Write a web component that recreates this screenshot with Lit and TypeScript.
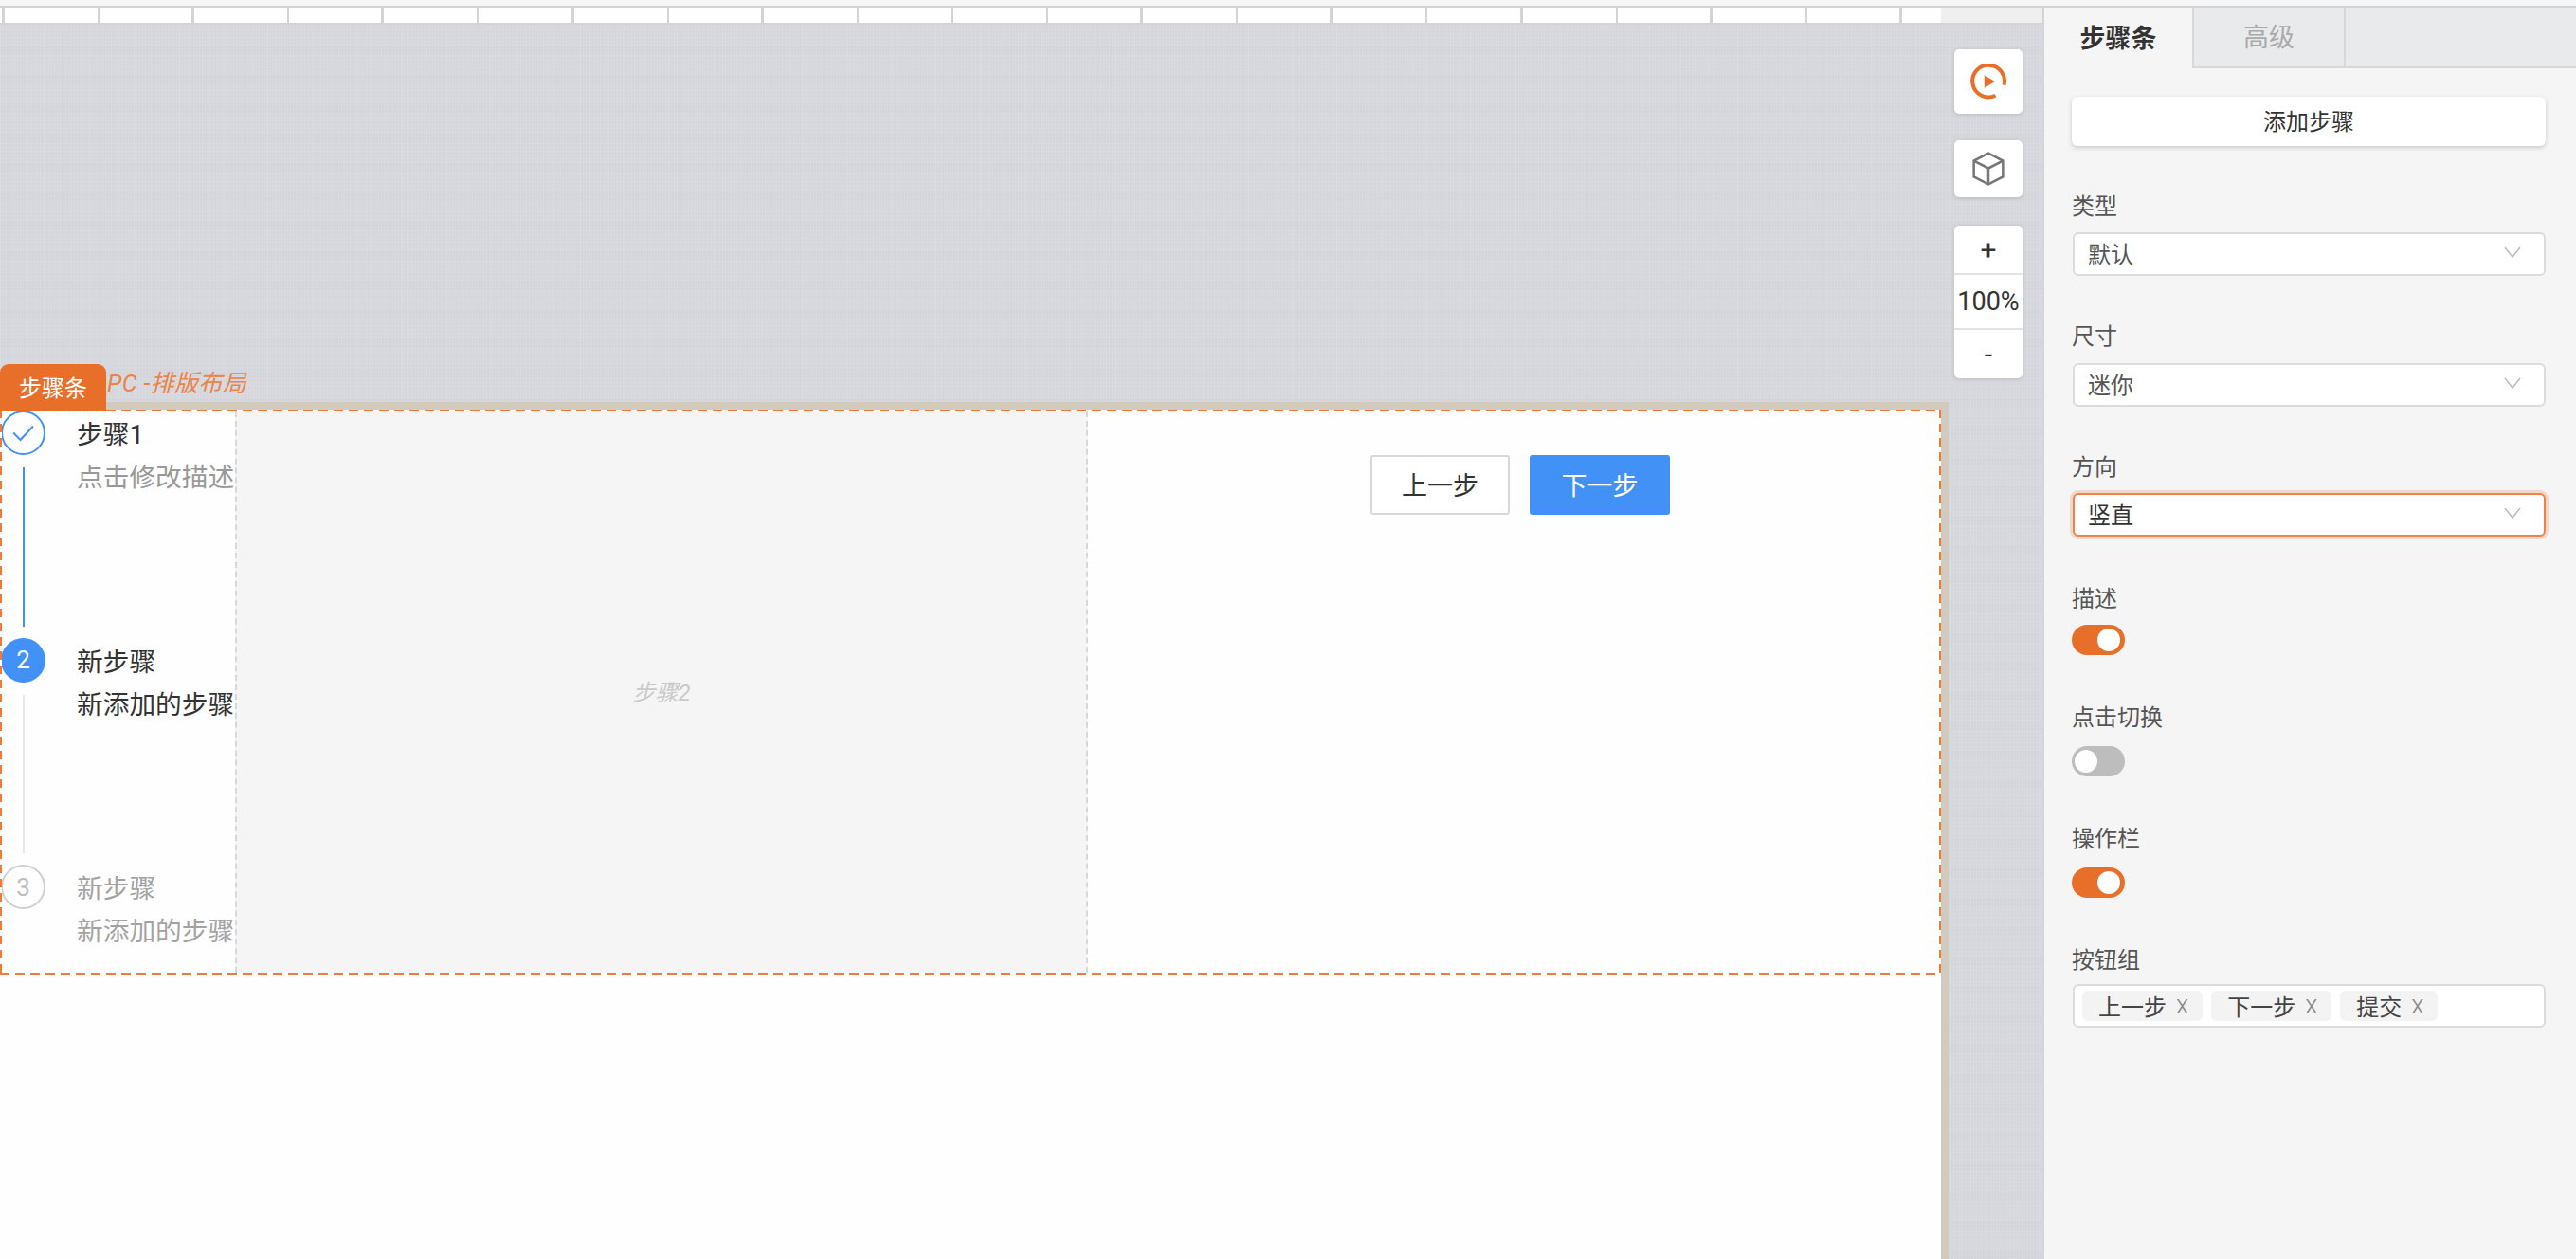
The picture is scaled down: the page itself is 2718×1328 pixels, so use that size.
import { LitElement, html, css } from 'lit';
import { customElement } from 'lit/decorators.js';

interface Step {
  mark: string;
  title: string;
  desc: string;
  state: string;
}

const STEPS: Step[] = [
  { mark: '', title: '步骤1', desc: '点击修改描述', state: 'done' },
  { mark: '2', title: '新步骤', desc: '新添加的步骤', state: 'active' },
  { mark: '3', title: '新步骤', desc: '新添加的步骤', state: 'todo' },
];

// top = gap above the label, gap = gap between label and control
const FIELDS = [
  { label: '类型', kind: 'select', value: '默认', top: 49, gap: 12 },
  { label: '尺寸', kind: 'select', value: '迷你', top: 49, gap: 13 },
  { label: '方向', kind: 'focus', value: '竖直', top: 49, gap: 12 },
  { label: '描述', kind: 'on', value: '', top: 51, gap: 12 },
  { label: '点击切换', kind: 'off', value: '', top: 51, gap: 15 },
  { label: '操作栏', kind: 'on', value: '', top: 51, gap: 15 },
  { label: '按钮组', kind: 'tags', value: '', top: 51, gap: 10 },
];

const TAGS = ['上一步', '下一步', '提交'];

@customElement('app-root')
export class AppRoot extends LitElement {
  static styles = css`
    :host {
      display: flex;
      flex-direction: column;
      width: 2718px;
      height: 1328px;
      overflow: hidden;
      background: #f5f5f5;
      font-family: Roboto, 'Noto Sans CJK SC', sans-serif;
      font-size: 24px;
      color: #333;
    }
    .top {
      flex: none;
      height: 6px;
      background: #f6f6f6;
      border-bottom: 2px solid #d4d4d4;
    }
    .main {
      flex: 1;
      display: flex;
      min-height: 0;
    }
    .stage {
      flex: none;
      width: 2155px;
      display: flex;
      flex-direction: column;
    }
    .ruler {
      flex: none;
      height: 16px;
      background: #efefef;
      border-bottom: 2px solid #d4d4d4;
    }
    .ticks {
      width: 2048px;
      height: 100%;
      background-color: #fefefe;
      background-image:
        repeating-linear-gradient(90deg, #d4d4d4 0 3px, transparent 3px 200.2px),
        repeating-linear-gradient(90deg, transparent 0 101px, #d4d4d4 101px 103px, transparent 103px 200.2px);
      background-position: 2px 0;
    }
    .canvas {
      flex: 1;
      position: relative;
      display: flex;
      flex-direction: column;
      padding-top: 398px;
      min-height: 0;
      background-color: #d5d7dc;
      background-image:
        repeating-linear-gradient(90deg, rgba(255, 255, 255, 0.07) 0 1px, transparent 1px 3px),
        repeating-linear-gradient(0deg, rgba(255, 255, 255, 0.06) 0 1px, transparent 1px 4px),
        repeating-linear-gradient(90deg, rgba(255, 255, 255, 0.05) 0 2px, transparent 2px 47px),
        repeating-linear-gradient(0deg, rgba(120, 125, 135, 0.025) 0 9px, transparent 9px 31px);
    }
    .tools {
      position: absolute;
      top: 26px;
      right: 21px;
      width: 72px;
      display: flex;
      flex-direction: column;
    }
    .tool {
      display: flex;
      align-items: center;
      justify-content: center;
      background: #fff;
      border-radius: 5px;
      box-shadow: 0 1px 4px rgba(0, 0, 0, 0.14);
    }
    .tool.play {
      height: 68px;
      margin-bottom: 28px;
    }
    .tool.cube {
      height: 60px;
      margin-bottom: 30px;
    }
    .tool.zoom {
      height: 161px;
      flex-direction: column;
    }
    .cell {
      width: 100%;
      display: flex;
      align-items: center;
      justify-content: center;
      color: #333;
    }
    .cell.plus {
      height: 50px;
      font-size: 30px;
    }
    .cell.pct {
      height: 60px;
      font-size: 27px;
      border-top: 2px solid #e2e2e2;
      border-bottom: 2px solid #e2e2e2;
      box-sizing: border-box;
    }
    .cell.minus {
      flex: 1;
      font-size: 30px;
    }
    .board {
      flex: 1;
      position: relative;
      width: 2048px;
      background: #fefefe;
      border-top: 8px solid #d3cabe;
      border-right: 8px solid #d3cabe;
    }
    .badge {
      position: absolute;
      left: 0;
      top: -48px;
      width: 112px;
      height: 49px;
      padding-bottom: 3px;
      box-sizing: border-box;
      display: flex;
      align-items: center;
      justify-content: center;
      background: #e86f2a;
      color: #fff;
      border-radius: 9px 9px 0 0;
      z-index: 1;
    }
    .crumb {
      position: absolute;
      left: 113px;
      top: -45px;
      line-height: 36px;
      font-size: 25px;
      letter-spacing: 0.4px;
      font-style: italic;
      color: #ec8347;
      white-space: nowrap;
    }
    .comp {
      height: 596px;
      box-sizing: border-box;
      padding: 2px;
      display: flex;
      background-image:
        linear-gradient(90deg, #f07a3a 10px, transparent 10px),
        linear-gradient(90deg, #f07a3a 10px, transparent 10px),
        linear-gradient(#f07a3a 9px, transparent 9px),
        linear-gradient(#f07a3a 9px, transparent 9px);
      background-size: 16px 2px, 16px 2px, 2px 15px, 2px 15px;
      background-position: 0 0, 0 100%, 0 0, 100% 0;
      background-repeat: repeat-x, repeat-x, repeat-y, repeat-y;
    }
    .steps {
      flex: none;
      width: 246px;
      margin-top: -1px;
      overflow: hidden;
    }
    .step {
      height: 239.5px;
      display: flex;
    }
    .rail {
      flex: none;
      width: 47px;
      margin-left: -1px;
      display: flex;
      flex-direction: column;
      align-items: center;
    }
    .dot {
      flex: none;
      width: 47px;
      height: 47px;
      box-sizing: border-box;
      border-radius: 50%;
      display: flex;
      align-items: center;
      justify-content: center;
      font-size: 26px;
    }
    .done .dot {
      border: 2px solid #4291f7;
    }
    .active .dot {
      background: #4291f7;
      color: #fff;
    }
    .todo .dot {
      border: 2px solid #cfcfcf;
      color: #bdbdbd;
    }
    .line {
      flex: 1;
      width: 2px;
      margin: 13px 0 12px;
      background: #e8e8e8;
    }
    .done .line {
      background: #4291f7;
    }
    .txt {
      margin-left: 33px;
      white-space: nowrap;
      font-size: 27.7px;
      padding-top: 4px;
    }
    .ttl {
      line-height: 44px;
    }
    .dsc {
      line-height: 46px;
      color: #999;
    }
    .active .dsc {
      color: #333;
    }
    .todo .ttl,
    .todo .dsc {
      color: #a3a3a3;
    }
    .pane {
      flex: none;
      width: 896px;
      padding-bottom: 4px;
      display: flex;
      align-items: center;
      justify-content: center;
      background: #f5f5f5;
      border-left: 2px dashed #d8d8d8;
      border-right: 2px dashed #d8d8d8;
      font-style: italic;
      color: #c9c9c9;
    }
    .actions {
      flex: 1;
      display: flex;
      justify-content: center;
      align-items: flex-start;
      gap: 21px;
      padding: 46px 0 0 14px;
    }
    .btn {
      width: 147px;
      height: 63px;
      box-sizing: border-box;
      display: flex;
      align-items: center;
      justify-content: center;
      padding-bottom: 2px;
      font-size: 27px;
      border-radius: 3px;
      background: #fff;
      border: 2px solid #d8d8d8;
    }
    .btn.primary {
      width: 148px;
      background: #4291f7;
      border-color: #4291f7;
      color: #fff;
    }
    .panel {
      flex: 1;
      min-width: 0;
      background: #f5f5f5;
      border-left: 2px solid #d4d4d4;
    }
    .tabs {
      height: 64px;
      box-sizing: border-box;
      display: flex;
      background: #e9eaec;
      border-bottom: 2px solid #d8d8d8;
    }
    .tab {
      width: 158px;
      padding-bottom: 3px;
      display: flex;
      align-items: center;
      justify-content: center;
      font-size: 27px;
      color: #aaa;
      border-right: 2px solid #d8d8d8;
    }
    .tab.on {
      width: 156px;
      height: 61px;
      background: #f5f5f5;
      color: #333;
      font-weight: 700;
    }
    .body {
      padding: 30px 32px 0 29px;
    }
    .add {
      height: 52px;
      padding-bottom: 4px;
      box-sizing: border-box;
      display: flex;
      align-items: center;
      justify-content: center;
      background: #fff;
      border-radius: 6px;
      box-shadow: 0 2px 5px rgba(0, 0, 0, 0.18);
    }
    .lbl {
      line-height: 30px;
      color: #555;
    }
    .sel {
      height: 46px;
      box-sizing: border-box;
      display: flex;
      align-items: center;
      justify-content: space-between;
      padding: 0 24px 4px 14px;
      margin-left: 1px;
      background: #fff;
      border: 2px solid #dcdcdc;
      border-radius: 6px;
      color: #555;
    }
    .sel.focus {
      border-color: #f08248;
      box-shadow: 0 0 0 3px rgba(240, 130, 72, 0.25);
      color: #333;
    }
    .sw {
      width: 56px;
      height: 32px;
      box-sizing: border-box;
      padding: 4px 5px;
      display: flex;
      border-radius: 16px;
      background: #e86f2a;
      justify-content: flex-end;
    }
    .sw.off {
      background: #bdbdbd;
      justify-content: flex-start;
      padding-left: 3px;
    }
    .knob {
      width: 24px;
      height: 24px;
      border-radius: 50%;
      background: #fff;
    }
    .tagbox {
      height: 46px;
      box-sizing: border-box;
      margin-left: 1px;
      display: flex;
      gap: 9px;
      padding: 5px 8px;
      background: #fff;
      border: 2px solid #dcdcdc;
      border-radius: 6px;
    }
    .tag {
      height: 32px;
      box-sizing: border-box;
      padding: 0 15px 2px 17px;
      display: flex;
      align-items: center;
      gap: 10px;
      background: #f3f3f3;
      border-radius: 6px;
      color: #444;
    }
    .tag i {
      font-style: normal;
      font-size: 27px;
      font-weight: 300;
      color: #888;
    }
  `;

  renderStep(s: Step, i: number) {
    return html`
      <div class="step ${s.state}">
        <div class="rail">
          <div class="dot">
            ${s.state === 'done'
              ? html`<svg width="23" height="18" viewBox="0 0 23 18" fill="none" stroke="#4291f7" stroke-width="2"><path d="M1 8.5 L8.5 16 L22 1.5"/></svg>`
              : s.mark}
          </div>
          ${i < STEPS.length - 1 ? html`<div class="line"></div>` : ''}
        </div>
        <div class="txt">
          <div class="ttl">${s.title}</div>
          <div class="dsc">${s.desc}</div>
        </div>
      </div>
    `;
  }

  renderControl(f: (typeof FIELDS)[number]) {
    if (f.kind === 'on' || f.kind === 'off') {
      return html`<div class="sw ${f.kind}"><div class="knob"></div></div>`;
    }
    if (f.kind === 'tags') {
      return html`<div class="tagbox">
        ${TAGS.map((t) => html`<div class="tag">${t}<i>x</i></div>`)}
      </div>`;
    }
    return html`<div class="sel ${f.kind}">
      ${f.value}
      <svg width="18" height="12" viewBox="0 0 18 12" fill="none" stroke="#bbb" stroke-width="1.5"><path d="M1 1 L9 11 L17 1"/></svg>
    </div>`;
  }

  render() {
    return html`
      <div class="top"></div>
      <div class="main">
        <div class="stage">
          <div class="ruler"><div class="ticks"></div></div>
          <div class="canvas">
            <div class="board">
              <div class="badge">步骤条</div>
              <div class="crumb">PC -排版布局</div>
              <div class="comp">
                <div class="steps">${STEPS.map((s, i) => this.renderStep(s, i))}</div>
                <div class="pane">步骤2</div>
                <div class="actions">
                  <div class="btn">上一步</div>
                  <div class="btn primary">下一步</div>
                </div>
              </div>
            </div>
            <div class="tools">
              <div class="tool play">
                <svg width="38" height="38" viewBox="0 0 36 36" fill="none" stroke="#e86f2a" stroke-width="3.8">
                  <path d="M25 32 A16 16 0 1 1 33.6 21.5" />
                  <path d="M14 11.5 L24.5 18 L14 24.5 Z" fill="#e86f2a" stroke="none" />
                </svg>
              </div>
              <div class="tool cube">
                <svg width="34" height="36" viewBox="0 0 32 34" fill="none" stroke="#777" stroke-width="2.4">
                  <path d="M16 1.5 L30.5 9 V25 L16 32.5 L1.5 25 V9 Z" />
                  <path d="M1.5 9 L16 16.5 L30.5 9 M16 16.5 V32.5" />
                </svg>
              </div>
              <div class="tool zoom">
                <div class="cell plus">+</div>
                <div class="cell pct">100%</div>
                <div class="cell minus">-</div>
              </div>
            </div>
          </div>
        </div>
        <div class="panel">
          <div class="tabs">
            <div class="tab on">步骤条</div>
            <div class="tab">高级</div>
          </div>
          <div class="body">
            <div class="add">添加步骤</div>
            ${FIELDS.map(
              (f) => html`
                <div class="lbl" style="margin-top:${f.top}px;margin-bottom:${f.gap}px">${f.label}</div>
                ${this.renderControl(f)}
              `
            )}
          </div>
        </div>
      </div>
    `;
  }
}
